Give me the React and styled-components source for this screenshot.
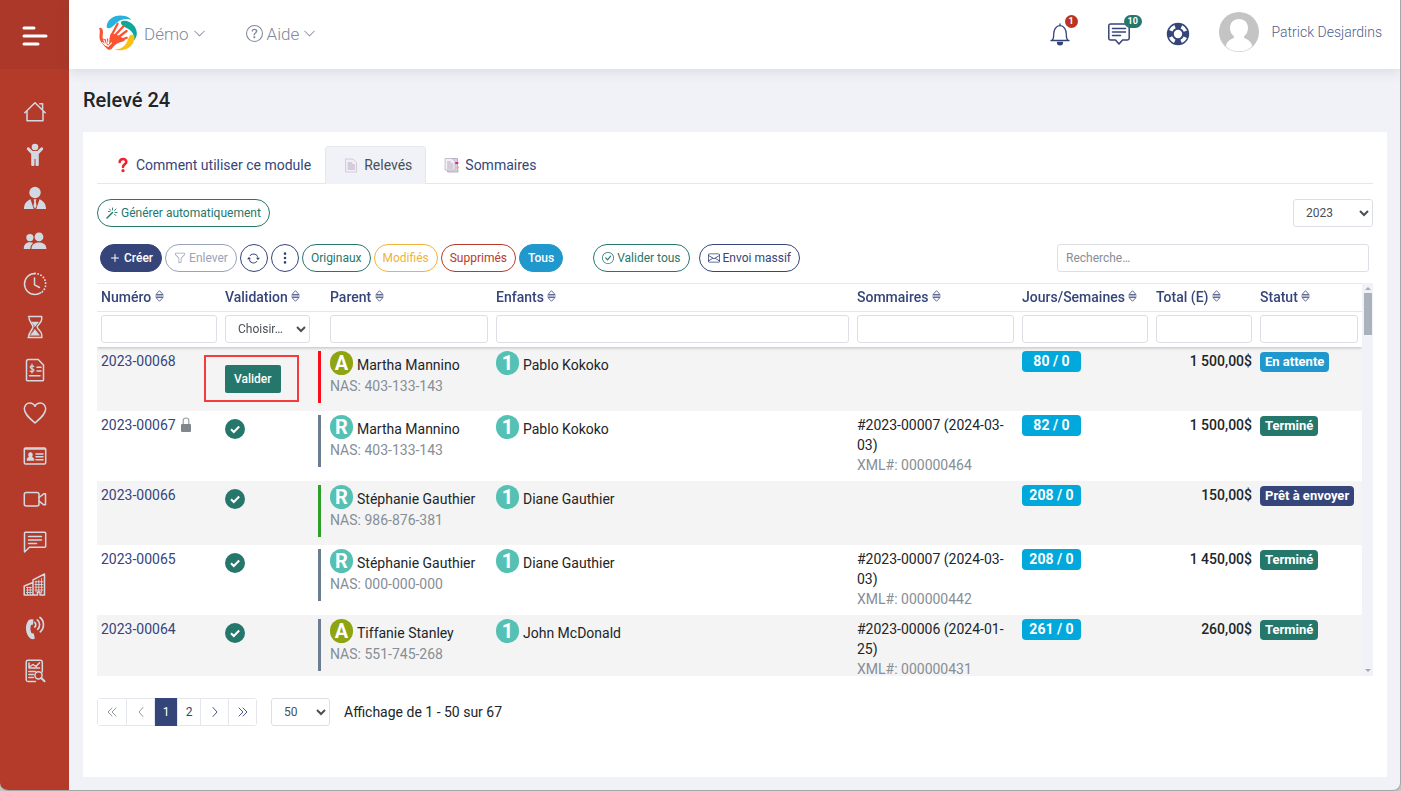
import React from 'react'
import styled, { createGlobalStyle, css } from 'styled-components'
import { BsArrowRepeat, BsCheckCircle, BsChevronDown, BsEnvelope, BsFunnel, BsQuestionCircle, BsThreeDotsVertical } from 'react-icons/bs'

const navy = '#354579'
const teal = '#26776b'
const line = '#e4e7ed'
const pale = '#f1f2f7'

const GlobalStyle = createGlobalStyle`
  * {
    box-sizing: border-box;
  }

  body {
    margin: 0;
    background: #c4c4c4;
    color: #212529;
    font: 400 14px/20px Roboto, sans-serif;
  }

  button, input, select {
    font: inherit;
  }

  a {
    color: ${navy};
    text-decoration: none;
  }
`

const Shell = styled.div`
  display: flex;
  min-height: 100vh;
  background: ${pale};
  border: 0 solid #a6a6a8;
  border-width: 0 1px 1px 0;
  border-radius: 0 0 8px 8px;
  overflow: hidden;
`

const Sidebar = styled.nav`
  flex: 0 0 69px;
  display: flex;
  flex-direction: column;
  background: #b43a29;
`

const MenuButton = styled.button`
  display: flex;
  align-items: center;
  justify-content: center;
  height: 69px;
  margin-bottom: 21px;
  padding: 3px 0 0;
  border: 0;
  background: #ac3829;
`

const SideLink = styled.a`
  display: flex;
  align-items: center;
  justify-content: center;
  height: 43px;
  color: #d3d9e2;
`

const Page = styled.div`
  flex: 1;
  min-width: 0;
  display: flex;
  flex-direction: column;
`

const Header = styled.header`
  display: flex;
  align-items: center;
  height: 69px;
  padding: 0 18px 2px 29px;
  background: #fff;
  box-shadow: 0 2px 12px rgba(60, 65, 90, 0.14);
`

const HeaderMenu = styled.button`
  display: flex;
  align-items: center;
  gap: 4px;
  margin: 0 34px 0 6px;
  padding: 0;
  border: 0;
  background: none;
  color: #84889c;
  font-size: 17px;
  font-weight: 300;
`

const HeaderRight = styled.div`
  display: flex;
  align-items: center;
  margin-left: auto;
`

const IconButton = styled.button`
  position: relative;
  width: 24px;
  height: 24px;
  margin-right: 35px;
  padding: 0;
  border: 0;
  background: none;
  color: ${navy};
`

const Count = styled.span`
  position: absolute;
  top: -7px;
  left: 17px;
  min-width: 13px;
  padding: 0 4px;
  border-radius: 7px;
  background: ${(p) => p.$color};
  color: #fff;
  font-size: 9px;
  font-weight: 700;
  line-height: 13px;
`

const UserLink = styled.a`
  display: flex;
  align-items: center;
  gap: 13px;
  margin: -3px 0 0 -6px;
  color: #4f5e90;
  font-weight: 300;
`

const Main = styled.main`
  flex: 1;
  display: flex;
  flex-direction: column;
  padding: 19px 13px 13px 14px;
`

const Title = styled.h1`
  margin: 0 0 20px;
  font-size: 20px;
  font-weight: 500;
  line-height: 24px;
`

const Card = styled.section`
  flex: 1;
  padding: 14px;
  background: #fff;
`

const Tabs = styled.div`
  display: flex;
  height: 38px;
  border-bottom: 1px solid ${line};
`

const Tab = styled.a`
  display: flex;
  align-items: center;
  gap: 4px;
  height: 38px;
  padding: 0 13px 2px 16px;
  border: 1px solid transparent;
  border-bottom: 0;
  border-radius: 4px 4px 0 0;

  ${(p) =>
    p.$active &&
    css`
      background: ${pale};
      border-color: ${line};
      color: #495057;
    `}
`

const ActionBar = styled.div`
  display: flex;
  justify-content: space-between;
  padding-top: 15px;
`

const Toolbar = styled.div`
  display: flex;
  align-items: center;
  gap: 3px;
  padding: 17px 4px 11px 3px;
`

const Pill = styled.button`
  display: inline-flex;
  align-items: center;
  justify-content: center;
  gap: 3px;
  height: 28px;
  min-width: 28px;
  padding: 0 ${(p) => (p.$round ? 0 : 8)}px;
  border: 1px solid ${(p) => p.$color};
  border-radius: 14px;
  background: ${(p) => (p.$solid ? p.$color : '#fff')};
  color: ${(p) => (p.$solid ? '#fff' : p.$color)};
  font-size: 12px;
  font-weight: ${(p) => (p.$solid ? 500 : 400)};
  white-space: nowrap;
`

const Batch = styled.div`
  display: flex;
  gap: 9px;
  margin-left: 27px;
`

const field = css`
  height: 28px;
  border: 1px solid #dcdfe6;
  border-radius: 3px;
  background: #fff;
  color: #495057;
  font-size: 12px;
`

const Input = styled.input`
  ${field}
  display: block;
  width: 100%;
  padding: 0 8px;

  &::placeholder {
    color: #868e96;
  }
`

const Search = styled(Input)`
  width: 312px;
  margin-left: auto;
`

const Select = styled.select`
  ${field}
  width: ${(p) => p.$width}px;
  padding: 0 0 0 8px;
`

const Scroller = styled.div`
  display: flex;
`

const TableBox = styled.div`
  flex: 1;
  min-width: 0;
  max-height: 393px;
  overflow: auto;
  scrollbar-width: none;
`

const Track = styled.div`
  flex: 0 0 11px;
  display: flex;
  flex-direction: column;
  align-items: center;
  justify-content: space-between;
  padding: 4px 0;
  background: ${pale};
`

const Thumb = styled.div`
  width: 8px;
  height: 42px;
  margin: 3px 0 auto;
  background: #aab3bb;
`

const Arrow = styled.span`
  border: 3px solid transparent;
  border-top-width: ${(p) => (p.$down ? 3 : 0)}px;
  border-bottom-width: ${(p) => (p.$down ? 0 : 3)}px;
  border-top-color: #a3acb4;
  border-bottom-color: #a3acb4;
`

const Table = styled.table`
  width: 100%;
  table-layout: fixed;
  border-collapse: separate;
  border-spacing: 0;

  thead {
    position: sticky;
    top: 0;
    z-index: 1;
    background: #fff;
    box-shadow: 0 1px 3px rgba(0, 0, 0, 0.22);
  }

  tbody tr:nth-child(odd) {
    background: #f4f4f4;
  }
`

const Th = styled.th`
  height: 28px;
  padding: 0 4px 2px ${(p) => (p.$wide ? 16 : 4)}px;
  border-top: 1px solid ${line};
  color: ${navy};
  font-weight: 500;
  text-align: left;
  white-space: nowrap;
`

const FilterCell = styled.td`
  height: 36px;
  padding: 3px 4px 4px ${(p) => (p.$wide ? 16 : 4)}px;
  border-top: 1px solid ${line};
`

const Td = styled.td`
  position: relative;
  height: 64px;
  padding: 4px 4px 6px;
  vertical-align: top;
  text-align: ${(p) => p.$align || 'left'};
  font-weight: ${(p) => (p.$align ? 500 : 400)};
`

const NumberLink = styled.a`
  display: flex;
  align-items: center;
  gap: 5px;
`

const ParentBox = styled.div`
  height: 52px;
  padding-left: 9px;
  border-left: 3px solid ${(p) => p.$color};
`

const Person = styled.div`
  display: flex;
  align-items: flex-end;
  gap: 4px;
  margin-bottom: 1px;
`

const Initial = styled.span`
  width: 23px;
  height: 24px;
  border-radius: 12px;
  background: ${(p) => p.$color};
  color: #fff;
  font-size: 20px;
  font-weight: 700;
  line-height: 24px;
  text-align: center;
`

const Muted = styled.div`
  color: #868e96;
`

const ValidateButton = styled.button`
  display: block;
  height: 28px;
  margin-top: 14px;
  padding: 0 9px;
  border: 0;
  border-radius: 2px;
  background: ${teal};
  color: #fff;
  font-size: 12px;
  font-weight: 500;
`

const Highlight = styled.span`
  position: absolute;
  top: 8px;
  left: -17px;
  width: 95px;
  height: 47px;
  border: 2px solid #f53b3b;
  pointer-events: none;
`

const Done = styled.svg`
  display: block;
  margin-top: 4px;
`

const Days = styled.span`
  display: block;
  width: 59px;
  border-radius: 4px;
  background: #00a8dc;
  color: #fff;
  font-weight: 700;
  line-height: 21px;
  text-align: center;
`

const Status = styled.span`
  display: inline-block;
  padding: 0 5px;
  border-radius: 4px;
  background: ${(p) => p.$color};
  color: #fff;
  font-size: 13px;
  font-weight: 700;
  line-height: 20px;
  white-space: nowrap;
`

const Footer = styled.div`
  display: flex;
  align-items: center;
  gap: 14px;
  padding-top: 22px;
`

const Pager = styled.div`
  display: flex;
  border: 1px solid ${line};
  border-radius: 3px;
`

const PageButton = styled.button`
  display: flex;
  align-items: center;
  justify-content: center;
  width: ${(p) => (p.$number ? 23 : 28)}px;
  height: 26px;
  padding: 0;
  border: 0;
  background: #fff;
  color: ${navy};
  font-size: 12px;

  & + & {
    border-left: 1px solid ${line};
  }

  &:disabled {
    color: #868e96;
  }

  &[aria-current] {
    margin: -1px 0;
    height: 28px;
    background: ${navy};
    color: #fff;
  }
`

const Icon = ({ children, size = 24, width = 1.3, box = 24 }) => (
  <svg width={size} height={size} viewBox={`0 0 ${box} ${box}`} fill="none" stroke="currentColor" strokeWidth={width} strokeLinejoin="round" strokeLinecap="round" aria-hidden="true">
    {children}
  </svg>
)

const Logo = () => (
  <svg width="40" height="38" viewBox="0 0 40 38" fill="none" aria-hidden="true">
    <path fill="#27b1dc" d="M8.700 12.600C8 4 18-1.600 27 1.100c3.400.9 5.200 2.200 6.200 3.700-3.600-1.100-7-.8-10 .3-5 1.900-6.700 5.500-9.800 7.300-2 1-3.700 1-4.700.2z" />
    <path fill="#0ea79c" d="M22.800 7.600c.3-2 3.200-2.400 6.200-1.500 6.500 1.900 10.300 8 9.800 13.200-.3 2.700-1.600 4.900-2.800 6 .4-4.200-.8-7.500-3.800-10.100-3.200-2.700-8.600-2.800-9.400-7.600z" />
    <path fill="#fbc011" d="M31.200 21.500c1.200-2.400 5.300-2.200 5.300.8 0 7-6 12.500-13 13-3 .2-5.200-.2-6.500-1 4.200 0 6.900-1.300 9.300-3.600 2.900-2.800 3.100-5.600 4.900-9.200z" />
    <path fill="#fb5330" d="M1.200 13.200c1.600-1 3.100.4 3.600 2.300.7 2.700-.6 5.200-.2 8l3 .7 1.800-1 1.600 1.700 1.800-6.500 5.400 1.200 8 4.200c1.500 1 .5 2.400-1.400 2.700-4.800.7-8.300 3.500-11 7.200-1 1.200-3 1.500-4.300.5C6 30.600 1.800 27 1.500 22.500c-.2-3.200 1-5.900-.3-9.300z" />
    <path stroke="#fb5330" strokeWidth="2.2" strokeLinecap="round" d="M13.200 21l6.400-12.300M16 21.500l9.900-10.800M18 24l10.600-8M20 26l8.800-3.200" />
    <path stroke="#fff" strokeWidth="1.1" strokeLinecap="round" d="M5.800 25l1.800 4.200M8.300 23.800l.9 5M10.900 24.200l-.4 4.600M4.500 27.600l3.600 3M13.500 27.800l-3.200 3.400M7.800 29.500l2.600 2" />
  </svg>
)

const Sort = () => (
  <svg width="9" height="12" viewBox="0 0 9 12" fill="none" stroke="#5f6c96" aria-hidden="true">
    <path d="M1 4.500L4.500.7 8 4.500zM1 7.500l3.500 3.800L8 7.500zM.3 6h8.400" />
  </svg>
)

const Lock = () => (
  <svg width="10" height="16" viewBox="0 0 10 16" fill="#82878d" aria-hidden="true">
    <path d="M2.200 8V3.800a2.800 2.800 0 015.600 0V8" fill="none" stroke="#9aa0a6" strokeWidth="1.200" />
    <rect y="7" width="10" height="8" rx="1" />
  </svg>
)

const sideItems = [
  ['Accueil', <Icon width={1.500}><path d="M1.800 12.800L12 2.800l10.200 10M4 11v9.700h16V11M16.800 3.700h2.800v5" /></Icon>],
  ['Enfants', <Icon><g fill="currentColor" stroke="none"><circle cx="12" cy="4" r="3.300" /><path d="M4.300 4.700c.8-.7 1.500-.5 2.200.2L9.600 8h4.800l3.100-3.100c.7-.7 1.400-.9 2.200-.2.700.8.500 1.500-.1 2.200L15.800 11v11.300c0 1-3.300 1-3.300 0V16h-1v6.300c0 1-3.300 1-3.300 0V11L4.400 6.900c-.6-.7-.8-1.400-.1-2.200z" /></g></Icon>],
  ['Personnel', <Icon><g fill="currentColor" stroke="none"><circle cx="12" cy="6.500" r="5.700" /><path d="M1 23c0-4.700 2-8 6.500-9.800L10.700 23zM23 23c0-4.700-2-8-6.500-9.800L13.300 23zM10.600 13.200h2.800l-.6 2.200.8 4.600-1.600 2.700-1.600-2.700.8-4.600z" /></g></Icon>],
  ['Parents', <Icon><g fill="currentColor" stroke="none"><circle cx="6.900" cy="8.600" r="3.600" /><circle cx="16" cy="7.900" r="4.400" /><path d="M.8 20c0-4.500 2.300-6.800 6.100-6.800 1.400 0 2.500.3 3.300.8C8.300 15.500 7.400 17.300 7.200 20zM8.500 20c0-4.300 2.900-6.500 7.500-6.500s7.400 2.200 7.400 6.500z" /></g></Icon>],
  ['Horaire', <Icon width={1.500}><path d="M12 1.500a10.500 10.500 0 100 21c2.200 0 4.200-.6 5.900-1.800M11.500 6v6.800l5 2.700" /><path d="M12 1.500a10.500 10.500 0 017 18.500" strokeDasharray="0.1 3" strokeWidth="1.900" /></Icon>],
  ['Attente', <Icon width={1.500}><path d="M5.500 1.500h13.200v2.700c0 3.300-4.500 5.600-4.500 7.800s4.500 4.300 4.500 7.500v3M5.500 22.500C5.500 17 10 14.500 10 12S6 6.500 6 3M5 22.500h14" /><path fill="currentColor" strokeWidth=".5" d="M8.500 7h7L12 11.500zM12 14.500l4.500 5.800h-9z" /></Icon>],
  ['Factures', <Icon width={1.500}><path d="M5.500 1.500h9.700L20.500 7v15c0 .4-.3.700-.7.700H4.300a.8.800 0 01-.8-.7V3.500c0-1.200.7-2 2-2zM14 9.200h4M14 13h4M6.500 17.800H17" /><path strokeWidth="1.200" d="M10.800 8.500c-.6-.8-3.600-.9-3.600.8 0 2 3.800.9 3.800 3 0 1.700-3.200 1.800-4 .7M9 6v9" /></Icon>],
  ['Santé', <Icon width={1.500}><path d="M12 22C7 17.500 1.300 13.200 1.300 7.800 1.300 4.500 3.700 2 6.700 2c2.300 0 4.300 1.300 5.300 3.300C13 3.300 15 2 17.300 2c3 0 5.400 2.500 5.400 5.800C22.700 13.200 17 17.500 12 22z" /></Icon>],
  ['Cartes', <Icon width={1.500}><rect x="1.300" y="4" width="21.400" height="16" rx="1.200" /><path d="M1.500 5h21M13 10h7M13 12.800h7M13 15.800h7" /><path fill="currentColor" strokeWidth=".5" d="M7.500 8.500c2.400 0 2.400 3.300 1.200 4.300.8.600 2.200.9 2.300 2.700v1H4v-1c.1-1.800 1.500-2.100 2.300-2.700C5.100 11.800 5.100 8.500 7.500 8.500z" /></Icon>],
  ['Vidéo', <Icon width={1.500}><rect x="1.300" y="5.500" width="14.700" height="13.500" rx="2" /><path d="M16 10.500l4.800-3.700h1.700v11h-1.700L16 14.200" /></Icon>],
  ['Messages', <Icon width={1.500}><path d="M2.500 2.300h19.200a1 1 0 011 1v12.900a1 1 0 01-1 1H6.500L1.500 22V3.300a1 1 0 011-1zM5.500 6.500h13M5.500 10h13M5.500 13.500h8" /></Icon>],
  ['Installations', <Icon width={1.500}><path d="M1.200 22v-9L10 9.500V22H1.200M10 22V6.800L21.500 1v21H17v-3h-2.500v3z" /><path d="M3.500 14.500h5M3.500 17h5M3.500 19.500h5M4.500 14v7M7.200 14v7M12 8.800h8M12 11.500h8M12 14.200h8M12 17h8M13 8v11M15.800 7v12M18.600 5.500V20" strokeWidth=".9" /></Icon>],
  ['Appels', <Icon width={1.700}><path fill="currentColor" stroke="none" d="M8.500 3.200l2 .2-.4 5-2.100.6c-1 2.800-.7 6 .6 8.300l2.200.3 1 5c-1 1.200-3.200.8-4.400-.1C2.300 18.500 1.800 9.500 5 5c.8-1.200 2.200-2 3.500-1.800z" /><path d="M11.800 6.500c1.300.8 1.300 3.500 0 4.500M14.300 4c3 1.800 3 7 .3 9.300M17 1.500c4.600 3.200 4.500 10.800.3 14.300" /></Icon>],
  ['Rapports', <Icon width={1.500}><path d="M12.500 22.500H5A1.800 1.800 0 013.200 21V3A1.800 1.800 0 015 1.300h12.500A1.800 1.800 0 0119.300 3v10M6 4v5h10.500M7 7.500l3-2 3 2 3.500-3.800M5.800 12.500h6.500M5.800 15.500h4.500M5.800 18.500h4.500" /><circle cx="15.500" cy="16.300" r="3.600" /><path d="M18.300 19l3.200 3.200" strokeWidth="2" /></Icon>],
]

const columns = [
  { name: 'Numéro', width: 124 },
  { name: 'Validation', width: 93 },
  { name: 'Parent', width: 178 },
  { name: 'Enfants' },
  { name: 'Sommaires', width: 165 },
  { name: 'Jours/Semaines', width: 134 },
  { name: 'Total (E)', width: 104 },
  { name: 'Statut', width: 106 },
]

const statusColors = { 'En attente': '#2098cd', Terminé: teal, 'Prêt à envoyer': navy }

const rows = [
  { id: '2023-00068', type: 'A', bar: '#fb0d1b', parent: 'Martha Mannino', nas: '403-133-143', child: 'Pablo Kokoko', days: '80 / 0', total: '1 500,00$', status: 'En attente', pending: true },
  { id: '2023-00067', type: 'R', bar: '#6c7d90', parent: 'Martha Mannino', nas: '403-133-143', child: 'Pablo Kokoko', summary: '#2023-00007 (2024-03-03)', xml: '000000464', days: '82 / 0', total: '1 500,00$', status: 'Terminé', locked: true },
  { id: '2023-00066', type: 'R', bar: '#2f9e2b', parent: 'Stéphanie Gauthier', nas: '986-876-381', child: 'Diane Gauthier', days: '208 / 0', total: '150,00$', status: 'Prêt à envoyer' },
  { id: '2023-00065', type: 'R', bar: '#6c7d90', parent: 'Stéphanie Gauthier', nas: '000-000-000', child: 'Diane Gauthier', summary: '#2023-00007 (2024-03-03)', xml: '000000442', days: '208 / 0', total: '1 450,00$', status: 'Terminé' },
  { id: '2023-00064', type: 'A', bar: '#6c7d90', parent: 'Tiffanie Stanley', nas: '551-745-268', child: 'John McDonald', summary: '#2023-00006 (2024-01-25)', xml: '000000431', days: '261 / 0', total: '260,00$', status: 'Terminé' },
]

const Row = ({ row }) => (
  <tr>
    <Td>
      <NumberLink href="#">
        {row.id}
        {row.locked && <Lock />}
      </NumberLink>
    </Td>
    <Td>
      {row.pending ? (
        <>
          <ValidateButton type="button">Valider</ValidateButton>
          <Highlight />
        </>
      ) : (
        <Done width="20" height="20" viewBox="0 0 20 20" fill="none" role="img" aria-label="Validé">
          <circle cx="10" cy="10" r="10" fill={teal} />
          <path d="M6 10.200l2.800 2.800L14.200 7.500" stroke="#fff" strokeWidth="2" />
        </Done>
      )}
    </Td>
    <Td>
      <ParentBox $color={row.bar}>
        <Person>
          <Initial $color={row.type === 'A' ? '#8ea410' : '#55c1b5'}>{row.type}</Initial>
          {row.parent}
        </Person>
        <Muted>NAS: {row.nas}</Muted>
      </ParentBox>
    </Td>
    <Td>
      <Person>
        <Initial $color="#55c1b5">1</Initial>
        {row.child}
      </Person>
    </Td>
    <Td>
      {row.summary}
      {row.xml && <Muted>XML#: {row.xml}</Muted>}
    </Td>
    <Td>
      <Days>{row.days}</Days>
    </Td>
    <Td $align="right">{row.total}</Td>
    <Td>
      <Status $color={statusColors[row.status]}>{row.status}</Status>
    </Td>
  </tr>
)

const App = () => (
  <Shell>
    <GlobalStyle />
    <Sidebar>
      <MenuButton type="button" aria-label="Menu">
        <svg width="26" height="22" viewBox="0 0 26 22" stroke="#fff" strokeWidth="3" strokeLinecap="round">
          <path d="M2 3h10M2 11h22M2 19h14" />
        </svg>
      </MenuButton>
      {sideItems.map(([label, icon]) => (
        <SideLink key={label} href="#" aria-label={label}>
          {icon}
        </SideLink>
      ))}
    </Sidebar>
    <Page>
      <Header>
        <Logo />
        <HeaderMenu type="button">
          Démo <BsChevronDown size={13} />
        </HeaderMenu>
        <HeaderMenu type="button">
          <BsQuestionCircle size={17} /> Aide <BsChevronDown size={13} />
        </HeaderMenu>
        <HeaderRight>
          <IconButton type="button" aria-label="Notifications">
            <Icon>
              <path d="M4 18.500c1.500-1.300 1.700-3 1.700-6.200C5.700 8 7.800 3.700 12 3.700s6.300 4.300 6.300 8.600c0 3.200.2 4.900 1.700 6.200zM12 3.500V2M3 18.500h18" />
              <path d="M9.500 20.500h5c0 3-5 3-5 0z" fill="currentColor" />
            </Icon>
            <Count $color="#b93425">1</Count>
          </IconButton>
          <IconButton type="button" aria-label="Messages">
            <Icon width={1.500}>
              <path d="M3.500 2h17c1 0 1.700.7 1.700 1.700v12.600c0 1-.7 1.700-1.700 1.700h-5L12 22l-3.500-4h-5c-1 0-1.700-.7-1.700-1.700V3.700C1.800 2.700 2.500 2 3.500 2zM5.500 6.500h13M5.500 10h13M5.500 13.500h8" />
            </Icon>
            <Count $color={teal}>10</Count>
          </IconButton>
          <IconButton type="button" aria-label="Soutien">
            <Icon>
              <circle cx="12" cy="12" r="7.700" strokeWidth="7" />
              <circle cx="12" cy="12" r="8" stroke="#fff" strokeWidth="3.600" strokeLinecap="butt" strokeDasharray="6 6.566" strokeDashoffset="-3.283" />
            </Icon>
          </IconButton>
          <UserLink href="#">
            <svg width="40" height="40" viewBox="0 0 40 40" aria-hidden="true">
              <circle cx="20" cy="20" r="20" fill="#c4c4c4" />
              <path fill="#fff" d="M20 7c5.500 0 9 3.800 9 9 0 3.500-1.500 6.200-3.700 8-.8 1.200-.2 2 1 2.400 3.700 1.300 6.200 3.900 7 7.800a19.500 19.500 0 01-26.600 0c.8-3.900 3.300-6.500 7-7.800 1.200-.4 1.800-1.200 1-2.400-2.200-1.800-3.700-4.500-3.700-8 0-5.200 3.500-9 9-9z" />
            </svg>
            Patrick Desjardins
          </UserLink>
        </HeaderRight>
      </Header>
      <Main>
        <Title>Relevé 24</Title>
        <Card>
          <Tabs>
            <Tab href="#">
              <Icon size={18} box={18} width={2.600}>
                <path stroke="#f0222e" d="M5.700 6c0-4 6.800-4 6.600 0 0 2.300-3.300 2.300-3.300 5" />
                <circle cx="9" cy="14.700" r="1.600" fill="#f0222e" stroke="none" />
              </Icon>
              Comment utiliser ce module
            </Tab>
            <Tab href="#" $active>
              <Icon size={18} box={18} width={1}>
                <path d="M4 3h7l3.500 3.500V16H4z" fill="#f4eff7" stroke="#d3c8da" />
                <path d="M6 7h4M6 9h6.500M6 11h6.500M6 13h6.500" stroke="#b5a9bd" />
              </Icon>
              Relevés
            </Tab>
            <Tab href="#">
              <Icon size={18} box={18} width={1}>
                <path d="M5 2.500h9.500V14H15v2H5z" fill="#d8cfdf" stroke="#b9aec2" />
                <path d="M2.500 2.500h6.500l3 3V14H2.500z" fill="#f4eff7" stroke="#c7bbcf" />
                <path d="M4.500 6h3M4.500 8h5.500M4.500 10h5.500M4.500 12h5.500" stroke="#b5a9bd" />
                <path d="M13 7h1.500" stroke="#e0208c" strokeWidth="2" />
                <path d="M14.500 11.500h.5" stroke="#fbb924" strokeWidth="2" />
              </Icon>
              Sommaires
            </Tab>
          </Tabs>
          <ActionBar>
            <Pill type="button" $color={teal}>
              <Icon size={12} width={1.800}>
                <path d="M2 22L13 11" strokeWidth="3" />
                <path d="M13 2v4M7 4l2 2.500M20 4l-3 3M22 11h-4M19.500 17L17 14.500M5 9h3" />
              </Icon>
              Générer automatiquement
            </Pill>
            <Select $width={80} aria-label="Année" defaultValue="2023">
              <option>2023</option>
            </Select>
          </ActionBar>
          <Toolbar>
            <Pill type="button" $color={navy} $solid>
              <Icon size={12} width={2}><path d="M12 5v14M5 12h14" /></Icon>
              Créer
            </Pill>
            <Pill type="button" $color="#9aa2bc">
              <BsFunnel size={12} /> Enlever
            </Pill>
            <Pill type="button" $color={navy} $round aria-label="Rafraîchir">
              <BsArrowRepeat size={13} />
            </Pill>
            <Pill type="button" $color={navy} $round aria-label="Plus">
              <BsThreeDotsVertical size={14} />
            </Pill>
            <Pill type="button" $color={teal}>Originaux</Pill>
            <Pill type="button" $color="#efb33a">Modifiés</Pill>
            <Pill type="button" $color="#b93a2b">Supprimés</Pill>
            <Pill type="button" $color="#2098cd" $solid>Tous</Pill>
            <Batch>
              <Pill type="button" $color={teal}>
                <BsCheckCircle size={12} /> Valider tous
              </Pill>
              <Pill type="button" $color={navy}>
                <BsEnvelope size={12} /> Envoi massif
              </Pill>
            </Batch>
            <Search type="search" placeholder="Recherche…" aria-label="Recherche" />
          </Toolbar>
          <Scroller>
            <TableBox>
              <Table>
                <colgroup>
                  {columns.map((c) => (
                    <col key={c.name} width={c.width} />
                  ))}
                </colgroup>
                <thead>
                  <tr>
                    {columns.map((c) => (
                      <Th key={c.name} $wide={c.name === 'Parent'}>
                        {c.name} <Sort />
                      </Th>
                    ))}
                  </tr>
                  <tr>
                    {columns.map((c) => (
                      <FilterCell key={c.name} $wide={c.name === 'Parent'}>
                        {c.name === 'Validation' ? (
                          <Select $width={85} aria-label={c.name}>
                            <option>Choisir…</option>
                          </Select>
                        ) : (
                          <Input type="text" aria-label={c.name} />
                        )}
                      </FilterCell>
                    ))}
                  </tr>
                </thead>
                <tbody>
                  {rows.map((row) => (
                    <Row key={row.id} row={row} />
                  ))}
                </tbody>
              </Table>
            </TableBox>
            <Track>
              <Arrow />
              <Thumb />
              <Arrow $down />
            </Track>
          </Scroller>
          <Footer>
            <Pager>
              <PageButton type="button" disabled aria-label="Première page">
                <Icon size={12} width={1.800}><path d="M12 4l-8 8 8 8M20 4l-8 8 8 8" /></Icon>
              </PageButton>
              <PageButton type="button" disabled aria-label="Page précédente">
                <Icon size={12} width={1.800}><path d="M16 3l-8 9 8 9" /></Icon>
              </PageButton>
              <PageButton type="button" $number aria-current="page">1</PageButton>
              <PageButton type="button" $number>2</PageButton>
              <PageButton type="button" aria-label="Page suivante">
                <Icon size={12} width={1.800}><path d="M8 3l8 9-8 9" /></Icon>
              </PageButton>
              <PageButton type="button" aria-label="Dernière page">
                <Icon size={12} width={1.800}><path d="M4 4l8 8-8 8M12 4l8 8-8 8" /></Icon>
              </PageButton>
            </Pager>
            <Select $width={59} aria-label="Lignes par page">
              <option>50</option>
            </Select>
            <span>Affichage de 1 - 50 sur 67</span>
          </Footer>
        </Card>
      </Main>
    </Page>
  </Shell>
)

export default App
